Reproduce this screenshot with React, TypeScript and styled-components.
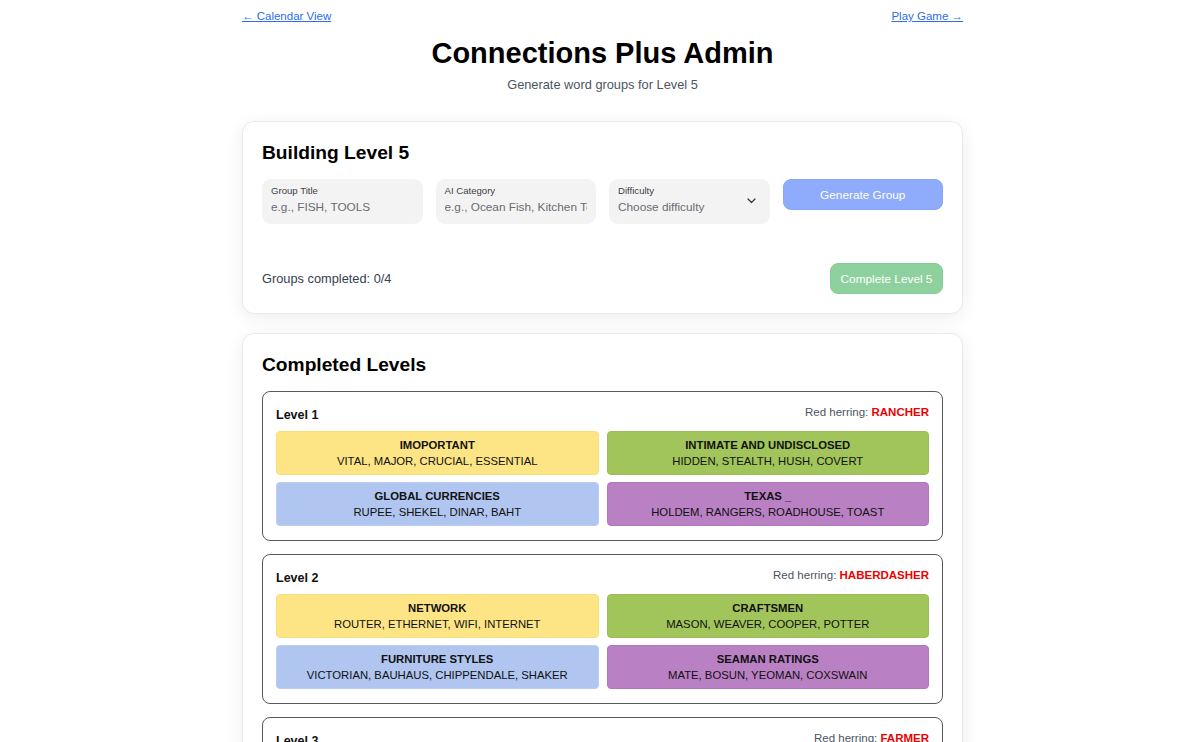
import React from "react";
import styled, { createGlobalStyle } from "styled-components";

const Global = createGlobalStyle`
  html, body { margin: 0; padding: 0; background: #ffffff; }
  body { font-family: "Liberation Sans", Arial, Helvetica, sans-serif; color: #111; }
  * { box-sizing: border-box; }
`;

const Shell = styled.div`
  display: flex;
  justify-content: center;
  padding-left: 5px;
`;

const Page = styled.div`
  width: 721px;
  padding: 8px 0 40px;
`;

const NavRow = styled.div`
  display: flex;
  justify-content: space-between;
  align-items: center;
  height: 16px;
`;

const NavLink = styled.a`
  font-size: 11.5px;
  line-height: 16px;
  color: #2b6cf0;
  text-decoration: underline;
  cursor: pointer;
`;

const Title = styled.h1`
  margin: 12px 0 0;
  font-size: 29px;
  line-height: 34px;
  font-weight: 700;
  text-align: center;
  color: #000;
`;

const Subtitle = styled.p`
  margin: 6px 0 0;
  font-size: 12.8px;
  line-height: 18px;
  text-align: center;
  color: #4b5563;
`;

const Card = styled.section<{ $mt: number }>`
  margin-top: ${(p) => p.$mt}px;
  background: #fff;
  border: 1px solid #e9eaec;
  border-radius: 12px;
  box-shadow: 0 4px 18px rgba(0, 0, 0, 0.07);
  padding: 19px;
`;

const CardTitle = styled.h2`
  margin: 0 0 14px;
  font-size: 19.2px;
  line-height: 24px;
  font-weight: 700;
  color: #000;
`;

const FormGrid = styled.div`
  display: grid;
  grid-template-columns: repeat(4, minmax(0, 1fr));
  gap: 13px;
  align-items: start;
`;

const Field = styled.label`
  position: relative;
  height: 45px;
  min-width: 0;
  background: #f3f3f4;
  border-radius: 9px;
  padding: 6px 9px;
  display: flex;
  flex-direction: column;
  gap: 2px;
  overflow: hidden;
`;

const FieldLabel = styled.span`
  font-size: 9.6px;
  line-height: 12px;
  color: #3f3f46;
`;

const FieldInput = styled.input`
  width: 100%;
  border: none;
  outline: none;
  background: transparent;
  padding: 0;
  margin: 0;
  font-family: inherit;
  font-size: 11.8px;
  line-height: 17px;
  height: 17px;
  color: #333;
  &::placeholder {
    color: #6b6b72;
    opacity: 1;
  }
`;

const FieldValue = styled.span`
  font-size: 11.8px;
  line-height: 17px;
  color: #6b6b72;
  white-space: nowrap;
`;

const Chevron = styled.svg`
  position: absolute;
  right: 14px;
  top: 19px;
`;

const Button = styled.button<{ $color: string; $border: string; $w?: number }>`
  height: 31px;
  width: ${(p) => (p.$w ? `${p.$w}px` : "100%")};
  background: ${(p) => p.$color};
  border: 1px solid ${(p) => p.$border};
  border-radius: 8px;
  color: #fff;
  font-family: inherit;
  font-size: 11.8px;
  padding: 0;
  cursor: default;
`;

const FooterRow = styled.div`
  margin-top: 39px;
  display: flex;
  justify-content: space-between;
  align-items: center;
`;

const Progress = styled.span`
  font-size: 12.8px;
  color: #374151;
`;

const LevelList = styled.div`
  display: flex;
  flex-direction: column;
  gap: 13px;
`;

const LevelBox = styled.div`
  border: 1px solid #58595c;
  border-radius: 8px;
  padding: 12px 13px 14px;
`;

const LevelHeader = styled.div`
  display: flex;
  justify-content: space-between;
  align-items: flex-start;
  height: 20px;
  margin-bottom: 7px;
`;

const LevelName = styled.span`
  font-size: 12.5px;
  font-weight: 700;
  color: #111;
  line-height: 20px;
  padding-top: 1px;
`;

const Herring = styled.span`
  font-size: 11.5px;
  color: #4b5563;
  line-height: 16px;
`;

const HerringWord = styled.strong`
  color: #ee0000;
  font-weight: 700;
`;

const TileGrid = styled.div`
  display: grid;
  grid-template-columns: 1fr 1fr;
  gap: 7px 8px;
`;

const tileColors: Record<string, { bg: string; border: string }> = {
  yellow: { bg: "#fde586", border: "#fadf77" },
  green: { bg: "#a1c45b", border: "#9bbd55" },
  blue: { bg: "#b0c5ef", border: "#bccdf2" },
  purple: { bg: "#ba80c4", border: "#b277bd" },
};

const Tile = styled.div<{ $c: string }>`
  height: 44px;
  border-radius: 4px;
  background: ${(p) => tileColors[p.$c].bg};
  border: 1px solid ${(p) => tileColors[p.$c].border};
  display: flex;
  flex-direction: column;
  align-items: center;
  justify-content: center;
  text-align: center;
  color: #111;
`;

const TileTitle = styled.span`
  font-size: 11.3px;
  font-weight: 700;
  line-height: 15px;
`;

const TileWords = styled.span`
  font-size: 11.3px;
  line-height: 16px;
`;

type Group = { c: string; title: string; words: string };
type Level = { n: number; herring: string; groups: Group[] };

const levels: Level[] = [
  {
    n: 1,
    herring: "RANCHER",
    groups: [
      { c: "yellow", title: "IMOPORTANT", words: "VITAL, MAJOR, CRUCIAL, ESSENTIAL" },
      { c: "green", title: "INTIMATE AND UNDISCLOSED", words: "HIDDEN, STEALTH, HUSH, COVERT" },
      { c: "blue", title: "GLOBAL CURRENCIES", words: "RUPEE, SHEKEL, DINAR, BAHT" },
      { c: "purple", title: "TEXAS _", words: "HOLDEM, RANGERS, ROADHOUSE, TOAST" },
    ],
  },
  {
    n: 2,
    herring: "HABERDASHER",
    groups: [
      { c: "yellow", title: "NETWORK", words: "ROUTER, ETHERNET, WIFI, INTERNET" },
      { c: "green", title: "CRAFTSMEN", words: "MASON, WEAVER, COOPER, POTTER" },
      { c: "blue", title: "FURNITURE STYLES", words: "VICTORIAN, BAUHAUS, CHIPPENDALE, SHAKER" },
      { c: "purple", title: "SEAMAN RATINGS", words: "MATE, BOSUN, YEOMAN, COXSWAIN" },
    ],
  },
  {
    n: 3,
    herring: "FARMER",
    groups: [
      { c: "yellow", title: "SHADES OF RED", words: "CRIMSON, SCARLET, RUBY, CHERRY" },
      { c: "green", title: "HARVEST TOOLS", words: "SCYTHE, SICKLE, PLOW, HOE" },
      { c: "blue", title: "DAIRY ITEMS", words: "BUTTER, CHEESE, CREAM, YOGURT" },
      { c: "purple", title: "_ YARD", words: "BARN, SCRAP, SHIP, BACK" },
    ],
  },
];

export default function App() {
  return (
    <>
      <Global />
      <Shell>
        <Page>
          <NavRow>
            <NavLink>← Calendar View</NavLink>
            <NavLink>Play Game →</NavLink>
          </NavRow>
          <Title>Connections Plus Admin</Title>
          <Subtitle>Generate word groups for Level 5</Subtitle>

          <Card $mt={27}>
            <CardTitle>Building Level 5</CardTitle>
            <FormGrid>
              <Field>
                <FieldLabel>Group Title</FieldLabel>
                <FieldInput placeholder="e.g., FISH, TOOLS" />
              </Field>
              <Field>
                <FieldLabel>AI Category</FieldLabel>
                <FieldInput placeholder="e.g., Ocean Fish, Kitchen Tools" />
              </Field>
              <Field>
                <FieldLabel>Difficulty</FieldLabel>
                <FieldValue>Choose difficulty</FieldValue>
                <Chevron width="9" height="6" viewBox="0 0 9 6" fill="none">
                  <path d="M1 1l3.5 3.5L8 1" stroke="#333" strokeWidth="1.2" strokeLinecap="round" strokeLinejoin="round" />
                </Chevron>
              </Field>
              <Button $color="#8eacfb" $border="#86a5f8">Generate Group</Button>
            </FormGrid>
            <FooterRow>
              <Progress>Groups completed: 0/4</Progress>
              <Button $color="#8ed19e" $border="#86cc97" $w={113}>Complete Level 5</Button>
            </FooterRow>
          </Card>

          <Card $mt={19}>
            <CardTitle>Completed Levels</CardTitle>
            <LevelList>
              {levels.map((lv) => (
                <LevelBox key={lv.n}>
                  <LevelHeader>
                    <LevelName>Level {lv.n}</LevelName>
                    <Herring>
                      Red herring: <HerringWord>{lv.herring}</HerringWord>
                    </Herring>
                  </LevelHeader>
                  <TileGrid>
                    {lv.groups.map((g) => (
                      <Tile key={g.title} $c={g.c}>
                        <TileTitle>{g.title}</TileTitle>
                        <TileWords>{g.words}</TileWords>
                      </Tile>
                    ))}
                  </TileGrid>
                </LevelBox>
              ))}
            </LevelList>
          </Card>
        </Page>
      </Shell>
    </>
  );
}
